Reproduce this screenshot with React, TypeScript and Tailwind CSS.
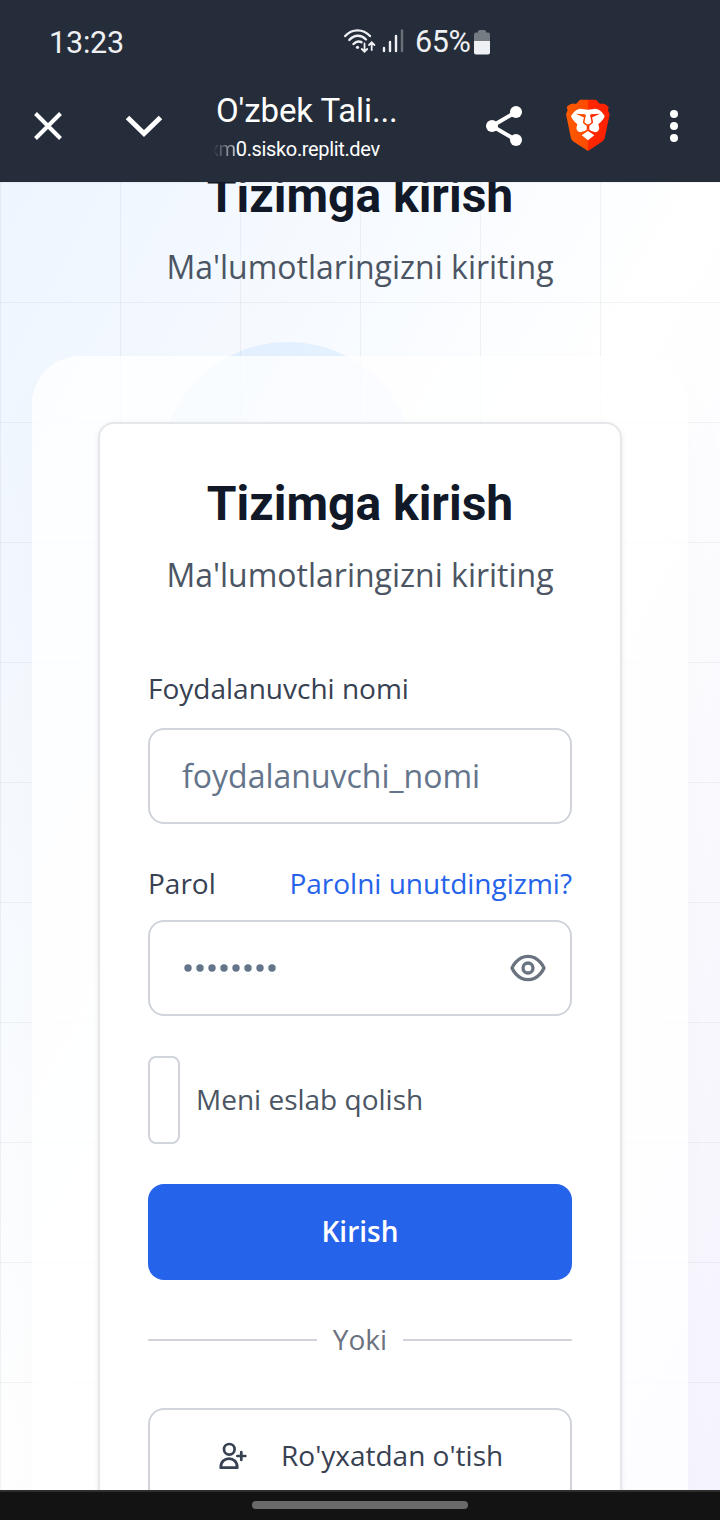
import React from "react";

function StatusBar() {
  return (
    <div className="flex h-[84px] items-center pl-[49px] pt-px text-[#eef0f3]">
      <span className="mt-0.5 w-[294px] text-[30.5px] leading-none tracking-[-0.2px]">13:23</span>
      <svg className="mb-px" width="62" height="30" viewBox="0 0 62 30" fill="none" stroke="currentColor" strokeWidth="2.4" strokeLinecap="round">
        <path d="M2.200 9C9 1.500 20 1.500 27 9M6.300 13C11.500 7.500 18 7.500 23 12.500M10.500 17C13 14.300 16 14 18.500 15.200" />
        <circle cx="14.500" cy="20.300" r="1.600" fill="currentColor" stroke="none" />
        <g strokeWidth="1.800">
          <path d="M21.500 16.500V24.500M18.800 22L21.500 24.700L24.200 22M28.700 23V15.500M26 18L28.700 15.300L31.400 18" />
        </g>
        <g strokeWidth="2.400">
          <path d="M41 21V24M47 15V24M53 9V24" />
          <path d="M59 3.500V24" opacity=".35" />
        </g>
      </svg>
      <span className="ml-[10px] text-[30.5px] leading-none tracking-[-0.4px]">65%</span>
      <svg className="ml-[4px]" width="16" height="25" viewBox="0 0 16 25" fill="currentColor">
        <path d="M4 1.500Q4 0 5.500 0H10.500Q12 0 12 1.500V2.500H14Q16 2.500 16 4.500V11H0V4.500Q0 2.500 2 2.500H4Z" opacity=".4" />
        <path d="M0 11H16V22.500Q16 24.500 14 24.500H2Q0 24.500 0 22.500Z" />
      </svg>
    </div>
  );
}

function BraveLogo() {
  return (
    <svg className="ml-[40px] mt-[15px] shrink-0" width="44" height="53" viewBox="288 58 132 159">
      <defs>
        <linearGradient id="mane" gradientUnits="userSpaceOnUse" x1="288" x2="420" y1="0" y2="0">
          <stop offset="0" stopColor="#ff5c00" /><stop offset=".49" stopColor="#ff4a00" />
          <stop offset=".51" stopColor="#ff2800" /><stop offset="1" stopColor="#ff1f00" />
        </linearGradient>
      </defs>
      <path fill="url(#mane)" d="M330 60H378L390 73Q402 68 416 82L414 92L419 104L404 176Q402 182 398 185L354 214L309 185Q305 182 303 176L288 104L293 92L290 82Q304 68 318 73Z" />
      <path fill="#fff" d="M330 87L354 90L377 87Q393 90 404 109Q401 120 385 134L388 146Q386 156 377 158Q366 157 354 147Q342 157 331 158Q321 156 319 146L322 134Q306 120 303 109Q314 90 330 87Z" />
      <path fill="#fff" d="M335 167L354 154L373 167L354 182Z" />
      <path fill="url(#mane)" d="M317 102L345 104L348 109L340 113ZM390 102L362 104L360 109L367 113Z" />
      <path fill="none" stroke="url(#mane)" strokeWidth="4.500" strokeLinejoin="round" d="M345 108L341 128Q343 132 354 138Q364 132 367 128L363 108" />
      <path fill="url(#mane)" d="M350 135H358V149H350Z" />
    </svg>
  );
}

function BrowserBar() {
  return (
    <div className="flex h-[98px] items-start text-white">
      <svg className="ml-[28px] mt-[22px] shrink-0" width="40" height="40" viewBox="0 0 40 40" fill="none" stroke="currentColor" strokeWidth="4">
        <path d="M7.500 7.500L32.500 32.500M32.500 7.500L7.500 32.500" />
      </svg>
      <svg className="ml-[54px] mt-[22px] shrink-0" width="44" height="40" viewBox="0 0 44 40" fill="none" stroke="currentColor" strokeWidth="5">
        <path d="M5.500 11.500L22 27.500L38.500 11.500" />
      </svg>
      <div className="ml-[50px] mt-[8px] w-[191px] shrink-0">
        <div className="text-[33px] leading-[38px] tracking-[-0.1px]">O'zbek Tali...</div>
        <div className="-ml-[7px] mt-[6px] flex text-[20px] leading-[26px] tracking-[-0.35px]">
          <span className="bg-linear-to-r from-transparent from-15% to-[#c5c8cc] bg-clip-text text-transparent">xm</span>
          <span>0.sisko.replit.dev</span>
        </div>
      </div>
      <svg className="ml-[75px] mt-[20px] shrink-0" width="44" height="44" viewBox="0 0 44 44" fill="currentColor">
        <path d="M34 8L10 22L34 36" fill="none" stroke="currentColor" strokeWidth="4" />
        <circle cx="34" cy="8" r="6" /><circle cx="10" cy="22" r="6" /><circle cx="34" cy="36" r="6" />
      </svg>
      <BraveLogo />
      <svg className="ml-[54px] mt-[22px] shrink-0" width="20" height="40" viewBox="0 0 20 40" fill="currentColor">
        <circle cx="10" cy="8" r="4" /><circle cx="10" cy="20" r="4" /><circle cx="10" cy="32" r="4" />
      </svg>
    </div>
  );
}

function Heading() {
  return (
    <div className="text-center">
      <h1 className="h-16 pt-px font-['Roboto',sans-serif] text-[48px] font-bold leading-[64px] text-[#111827]">Tizimga kirish</h1>
      <p className="mt-4 h-12 text-[32px] leading-[48px] text-[#4b5563]">Ma'lumotlaringizni kiriting</p>
    </div>
  );
}

function LoginForm() {
  return (
    <div className="mx-[66px] mt-[66px] h-[1200px] rounded-[16px] border-2 border-[#e5e7eb] bg-white px-12 pt-[47px] shadow-[0_2px_6px_rgba(0,0,0,0.08)]">
      <Heading />
      <div className="mt-[70px] h-10 text-[28px] leading-[38px] text-[#374151]">Foydalanuvchi nomi</div>
      <div className="mt-[19px] flex h-24 items-center rounded-[16px] border-2 border-[#d1d5db] pl-8 text-[32px] text-[#64748b]">foydalanuvchi_nomi</div>
      <div className="mt-10 flex h-10 justify-between text-[28px] leading-[38px]">
        <span className="text-[#374151]">Parol</span>
        <span className="text-[#2563eb]">Parolni unutdingizmi?</span>
      </div>
      <div className="mt-4 flex h-24 items-center justify-between rounded-[16px] border-2 border-[#d1d5db] pl-[34px] pr-[23px]">
        <svg width="96" height="12" viewBox="0 0 96 12" fill="#64748b">
          {[4, 16, 28, 40, 52, 64, 76, 88].map((x) => <circle key={x} cx={x} cy="6" r="3.700" />)}
        </svg>
        <svg width="38" height="40" viewBox="0 0 38 40" fill="none" stroke="#6b7280" strokeWidth="3.3" strokeLinecap="round" strokeLinejoin="round">
          <path d="M3 20s4.800-11.700 16-11.700 16 11.700 16 11.700-4.800 11.700-16 11.700-16-11.700-16-11.700Z" />
          <circle cx="19" cy="20" r="5" />
        </svg>
      </div>
      <div className="mt-10 flex h-[88px] items-center gap-4">
        <div className="h-full w-8 rounded-[8px] border-2 border-[#d1d5db]" />
        <span className="pb-0.5 text-[28px] text-[#4b5563]">Meni eslab qolish</span>
      </div>
      <button className="mt-10 block h-24 w-full rounded-[16px] bg-[#2563eb] pb-0.5 text-[28px] font-semibold text-white">Kirish</button>
      <div className="mt-10 flex h-10 items-center gap-4 text-[28px] leading-10 text-[#6b7280]">
        <div className="h-0.5 flex-1 bg-[#d1d5db]" />
        <span className="pb-0.5">Yoki</span>
        <div className="h-0.5 flex-1 bg-[#d1d5db]" />
      </div>
      <button className="mt-12 flex h-24 w-full items-center rounded-[16px] border-2 border-[#d1d5db] pl-[68px] text-[28px] text-[#374151]">
        <svg width="30" height="30" viewBox="0 0 30 30" fill="none" stroke="currentColor" strokeWidth="2.700" strokeLinecap="round" strokeLinejoin="round">
          <circle cx="11.300" cy="8.300" r="5.300" />
          <path d="M2.700 26.700C2.700 14.500 19.300 14.500 19.300 26.700ZM23.300 11V19M19.300 15H27.300" />
        </svg>
        <span className="ml-[33px] pb-0.5">Ro'yxatdan o'tish</span>
      </button>
    </div>
  );
}

export default function App() {
  return (
    <div className="flex h-[1520px] w-[720px] flex-col overflow-hidden font-['Open_Sans',sans-serif]">
      <header className="h-[182px] shrink-0 bg-[#262d3a] font-['Roboto',sans-serif]">
        <StatusBar />
        <BrowserBar />
      </header>
      <main className="relative h-[1308px] shrink-0 overflow-hidden bg-linear-to-br from-[#edf5ff] via-white to-[#f6f4fe]">
        <div className="absolute inset-0 bg-[linear-gradient(to_right,rgba(17,24,39,0.05)_1px,transparent_1px),linear-gradient(to_bottom,rgba(17,24,39,0.05)_1px,transparent_1px)] bg-size-[120px_120px]" />
        <div className="absolute left-[160px] top-[160px] size-[256px] rounded-full bg-[#5bb0ff]/12" />
        <div className="relative">
          <div className="-mt-[19px]"><Heading /></div>
          <div className="mx-8 mt-[65px] h-[1400px] overflow-hidden rounded-[48px] bg-white/80 shadow-[0_30px_80px_rgba(0,0,0,0.02)]">
            <LoginForm />
          </div>
        </div>
      </main>
      <footer className="flex h-[30px] shrink-0 justify-center border-t-2 border-[#2d2e30] bg-[#131313] pt-[9px]">
        <div className="h-2 w-[216px] rounded-full bg-[#696969]" />
      </footer>
    </div>
  );
}
